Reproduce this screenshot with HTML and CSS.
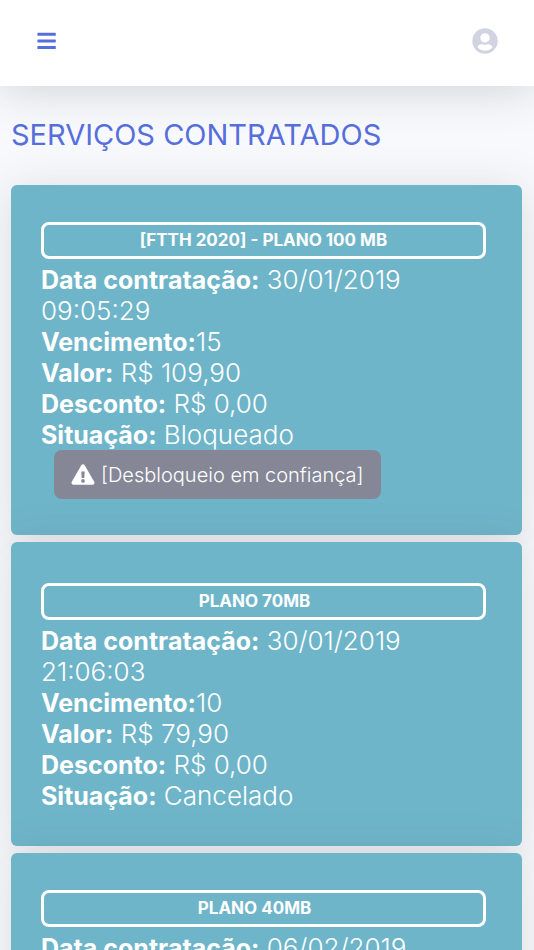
FILE: index.html
```html
<!DOCTYPE html>
<html lang="pt-BR">
<head>
  <meta charset="UTF-8">
  <meta name="viewport" content="width=device-width, initial-scale=1.0">
  <title>Serviços Contratados</title>
  <link rel="stylesheet" href="styles.css">
</head>
<body>
  <nav class="topbar">
    <button type="button" class="icon-btn menu-btn" aria-label="Menu">
      <svg width="20" height="18" viewBox="0 0 20 18">
        <rect x="1.400" y="0.800" width="18.400" height="3" rx="0.6"/>
        <rect x="1.400" y="7.400" width="18.400" height="3" rx="0.6"/>
        <rect x="1.400" y="14" width="18.400" height="3" rx="0.6"/>
      </svg>
    </button>
    <a href="#" class="icon-btn user-link" aria-label="Perfil">
      <svg width="26" height="26" viewBox="0 0 26 26">
        <path fill-rule="evenodd" d="M13 0.3a12.7 12.7 0 1 0 0 25.4a12.7 12.7 0 1 0 0-25.4zM13 5.2a4.7 4.7 0 1 1 0 9.4a4.7 4.7 0 1 1 0-9.4zM9.6 16.2c1.2 0 1.6 0.6 3.4 0.6s2.2-0.6 3.4-0.6c2 0 3.6 1.2 4.1 3c-1.700 2.200-4.500 3.500-7.500 3.500s-5.800-1.300-7.500-3.500c0.500-1.800 2.100-3 4.100-3z"/>
      </svg>
    </a>
  </nav>

  <main class="content">
    <h1>SERVIÇOS CONTRATADOS</h1>

    <section class="card">
      <h2 class="plan">[FTTH 2020] - PLANO 100 MB</h2>
      <p><strong>Data contratação:</strong> 30/01/2019 09:05:29</p>
      <p><strong>Vencimento:</strong>15</p>
      <p><strong>Valor:</strong> R$ 109,90</p>
      <p><strong>Desconto:</strong> R$ 0,00</p>
      <p><strong>Situação:</strong> Bloqueado</p>
      <button type="button" class="unlock-btn">
        <svg width="24" height="22" viewBox="0 0 24 22">
          <path fill-rule="evenodd" d="M10.300 1.200a2 2 0 0 1 3.400 0l9.500 16.600a2 2 0 0 1-1.700 3H2.500a2 2 0 0 1-1.700-3zM10.300 7.400l0.400 6.600h2.600l0.400-6.600zM12 15.100a1.850 1.850 0 1 0 0 3.700a1.850 1.850 0 1 0 0-3.700z"/>
        </svg>
        [Desbloqueio em confiança]
      </button>
    </section>

    <section class="card card-spaced">
      <h2 class="plan plan-short">PLANO 70MB</h2>
      <p><strong>Data contratação:</strong> 30/01/2019 21:06:03</p>
      <p><strong>Vencimento:</strong>10</p>
      <p><strong>Valor:</strong> R$ 79,90</p>
      <p><strong>Desconto:</strong> R$ 0,00</p>
      <p><strong>Situação:</strong> Cancelado</p>
    </section>

    <section class="card">
      <h2 class="plan plan-short">PLANO 40MB</h2>
      <p><strong>Data contratação:</strong> 06/02/2019</p>
    </section>
  </main>
</body>
</html>
```
FILE: styles.css
```css
* {
  box-sizing: border-box;
}

html {
  overflow: hidden;
}

body {
  margin: 0;
  background-color: #f8f9fc;
  font-family: Inter, "Liberation Sans", sans-serif;
}

.topbar {
  position: relative;
  display: flex;
  justify-content: space-between;
  align-items: center;
  height: 86px;
  padding: 0 36px 4px;
  background-color: #fff;
  box-shadow: 0 4px 46px rgba(58, 59, 69, 0.2);
}

.icon-btn {
  display: flex;
  padding: 0;
  border: 0;
  background: none;
  cursor: pointer;
}

.menu-btn {
  fill: #566fdc;
}

.user-link {
  fill: #d1d3e2;
}

.content {
  padding: 0 12px 0 11px;
}

h1 {
  margin: 0;
  padding: 29px 0 30px;
  color: #566fdc;
  font-size: 29px;
  line-height: 40px;
  font-weight: 400;
}

.card {
  margin-bottom: 7px;
  padding: 37px 36px 36px 30px;
  border-radius: 6px;
  background-color: #6fb5c9;
  color: #fff;
  box-shadow: 0 4px 46px rgba(58, 59, 69, 0.15);
}

.card-spaced {
  padding-top: 41px;
  padding-bottom: 35px;
}

.plan {
  margin: 0 0 5px;
  padding: 0 12px;
  border: 3px solid #fff;
  border-radius: 8px;
  font-size: 17px;
  line-height: 31px;
  font-weight: 700;
  text-align: center;
}

.plan-short {
  padding-right: 30px;
}

.card p {
  margin: 0;
  font-size: 26px;
  line-height: 31px;
  font-weight: 300;
}

.card strong {
  font-size: 25px;
  line-height: 20px;
  font-weight: 700;
}

.unlock-btn {
  display: flex;
  align-items: center;
  gap: 6px;
  height: 49px;
  margin-left: 13px;
  padding: 0 17px;
  border: 0;
  border-radius: 8px;
  background-color: #858796;
  color: #fff;
  fill: #fff;
  font-family: inherit;
  font-size: 20px;
  font-weight: 300;
  cursor: pointer;
}
```
